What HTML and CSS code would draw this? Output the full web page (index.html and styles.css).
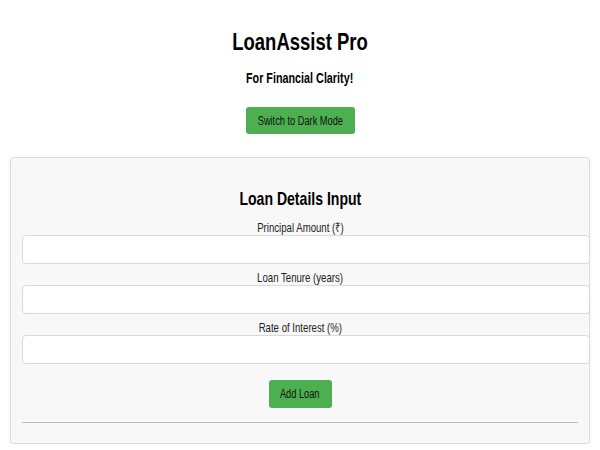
FILE: index.html
```html
<!DOCTYPE html>
<html lang="en">
<head>
<meta charset="utf-8">
<title>LoanAssist Pro</title>
<link rel="stylesheet" href="styles.css">
</head>
<body>
  <header class="header">
    <h1 class="title"><span class="narrow narrow-wide">LoanAssist Pro</span></h1>
    <p class="tagline"><span class="narrow narrow-wide">For Financial Clarity!</span></p>
    <button class="btn btn-mode"><span class="narrow narrow-wide">Switch to Dark Mode</span></button>
  </header>
  <section class="card">
    <h2 class="card-title"><span class="narrow">Loan Details Input</span></h2>
    <label class="field-label" for="principal"><span class="narrow">Principal Amount (₹)</span></label>
    <input class="field-input" id="principal" type="text">
    <label class="field-label" for="tenure"><span class="narrow">Loan Tenure (years)</span></label>
    <input class="field-input" id="tenure" type="text">
    <label class="field-label" for="rate"><span class="narrow">Rate of Interest (%)</span></label>
    <input class="field-input" id="rate" type="text">
    <div class="actions">
      <button class="btn btn-add"><span class="narrow narrow-wide">Add Loan</span></button>
    </div>
    <hr class="divider">
  </section>
</body>
</html>
```

FILE: styles.css
```css
* { box-sizing: content-box; }
body {
  margin: 0;
  padding: 0 10px;
  background: #ffffff;
  font-family: "Liberation Sans", Arial, sans-serif;
  color: #000;
}
.narrow {
  display: inline-block;
  white-space: nowrap;
  transform: scaleX(0.74);
  transform-origin: center;
}
.narrow-wide {
  transform: scaleX(0.77);
}
.header {
  display: flex;
  flex-direction: column;
  align-items: center;
  padding-top: 28px;
}
.title {
  margin: 0;
  font-size: 24px;
  line-height: 28px;
  font-weight: bold;
}
.tagline {
  margin: 14px 0 0;
  font-size: 14px;
  line-height: 16px;
  font-weight: bold;
}
.btn {
  font-family: inherit;
  background: #4caf50;
  color: #111;
  border: none;
  border-radius: 3px;
  font-size: 12px;
  cursor: pointer;
  display: flex;
  align-items: center;
  justify-content: center;
  white-space: nowrap;
}
.btn-mode {
  margin-top: 21px;
  width: 109px;
  height: 27px;
  padding: 0;
}
.card {
  margin-top: 23px;
  background: #f8f8f8;
  border: 1px solid #dcdcdc;
  border-radius: 4px;
  box-shadow: 0 1px 3px rgba(0,0,0,0.08);
  padding: 30px 11px 20px;
  display: flex;
  flex-direction: column;
  align-items: stretch;
}
.card-title {
  margin: 0 0 10px;
  text-align: center;
  font-size: 19px;
  line-height: 22px;
  font-weight: bold;
}
.field-label {
  display: block;
  text-align: center;
  font-size: 13px;
  line-height: 15px;
  color: #222;
}
.field-input {
  width: 100%;
  height: 17px;
  padding: 5px;
  margin: 0 0 6px;
  border: 1px solid #dadada;
  border-radius: 4px;
  background: #fff;
  font-size: 13px;
}
.actions {
  display: flex;
  justify-content: center;
  margin-top: 10px;
}
.btn-add {
  width: 63px;
  height: 28px;
  padding: 0;
}
.divider {
  margin: 14px 0 0;
  border: none;
  border-top: 1px solid #bdbdbd;
  height: 0;
}
```
